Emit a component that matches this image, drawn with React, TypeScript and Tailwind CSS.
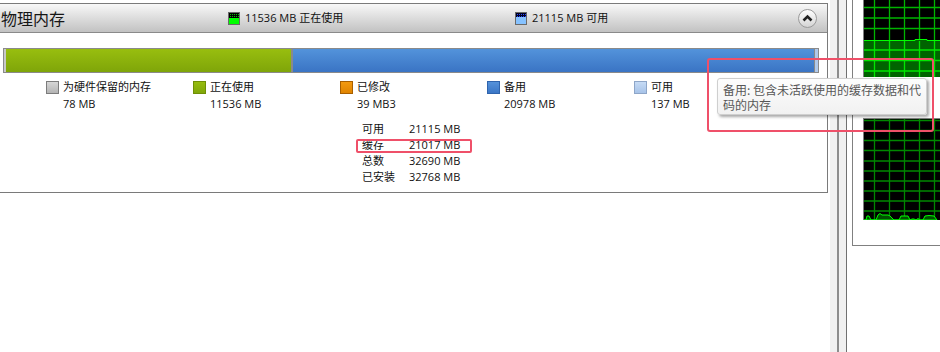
import React from "react";

const legend = [
  { label: "为硬件保留的内存", value: "78 MB", sw: "border-[#7c7c7c] bg-linear-to-b from-[#d6d6d6] to-[#b4b4b4]" },
  { label: "正在使用", value: "11536 MB", sw: "border-[#6f8f06] bg-linear-to-b from-[#96bc0e] to-[#80a70a]" },
  { label: "已修改", value: "39 MB3", sw: "border-[#a85f00] bg-linear-to-b from-[#f39a10] to-[#e08400]" },
  { label: "备用", value: "20978 MB", sw: "border-[#2f64ad] bg-linear-to-b from-[#5592da] to-[#3b76c6]" },
  { label: "可用", value: "137 MB", sw: "border-[#8ea6c8] bg-linear-to-b from-[#c6dbf5] to-[#a7c3e8]" },
];

const table = [
  ["可用", "21115 MB"],
  ["缓存", "21017 MB"],
  ["总数", "32690 MB"],
  ["已安装", "32768 MB"],
];

function UsedIcon() {
  return (
    <svg width="12" height="13" viewBox="0 0 12 13" className="shrink-0">
      <defs>
        <pattern id="gdots" width="2" height="2" patternUnits="userSpaceOnUse">
          <rect width="2" height="2" fill="#000" />
          <rect x="0" y="0" width="1" height="1" fill="#00c000" />
        </pattern>
      </defs>
      <rect x="0" y="0" width="12" height="13" fill="#00ff00" />
      <rect x="1" y="1" width="10" height="5" fill="url(#gdots)" />
      <rect x="0.5" y="0.5" width="11" height="12" fill="none" stroke="#6a6a6a" />
    </svg>
  );
}

function AvailIcon() {
  return (
    <svg width="12" height="13" viewBox="0 0 12 13" className="shrink-0">
      <defs>
        <pattern id="bdots" width="2" height="2" patternUnits="userSpaceOnUse">
          <rect width="2" height="2" fill="#000020" />
          <rect x="0" y="0" width="1" height="1" fill="#2a48ff" />
        </pattern>
      </defs>
      <rect x="0" y="0" width="12" height="13" fill="#86c2ff" />
      <rect x="1" y="1" width="10" height="4" fill="url(#bdots)" />
      <rect x="0.5" y="0.5" width="11" height="12" fill="none" stroke="#6a6a6a" />
    </svg>
  );
}

const vx = [10.5, 25.5, 40.5, 55.5, 70.5];

function TopGraph() {
  const topH = [7.5, 18, 28.5];
  const fillH = [50, 60.5, 71];
  return (
    <svg width="76" height="77" viewBox="0 0 76 77" className="block">
      <rect width="76" height="77" fill="#000" />
      {vx.map((x) => (
        <line key={x} x1={x} y1="0" x2={x} y2="41" stroke="#00b400" strokeWidth="1.3" />
      ))}
      {topH.map((y) => (
        <line key={y} x1="0" y1={y} x2="76" y2={y} stroke="#00b400" strokeWidth="1.3" />
      ))}
      <path d="M0,41 H51 V40 H63 V41 H76 V77 H0 Z" fill="#006400" />
      {vx.map((x) => (
        <line key={"f" + x} x1={x} y1="41" x2={x} y2="77" stroke="#00e600" strokeWidth="1.3" />
      ))}
      {fillH.map((y) => (
        <line key={"h" + y} x1="0" y1={y} x2="76" y2={y} stroke="#00e600" strokeWidth="1.3" />
      ))}
      <polyline points="0,40.5 51,40.5 51,39.5 63,39.5 63,40.5 76,40.5" fill="none" stroke="#00ff00" strokeWidth="1" />
    </svg>
  );
}

function BottomGraph() {
  const hs = [1.5, 11.5, 21.5, 31.5, 42, 52, 62, 72, 82, 92];
  return (
    <svg width="76" height="101" viewBox="0 0 76 101" className="block">
      <rect width="76" height="101" fill="#000" />
      {vx.map((x) => (
        <line key={x} x1={x} y1="0" x2={x} y2="101" stroke="#008800" strokeWidth="1.3" />
      ))}
      {hs.map((y) => (
        <line key={y} x1="0" y1={y} x2="76" y2={y} stroke="#008800" strokeWidth="1.3" />
      ))}
      <path
        d="M0,101 L2,101 L3,97 L5,97 L7,101 L12,101 L14,96 L16,94.5 L18,96 L24,96 L26,97 L30,101 L35,101 L37,97 L44,97 L46,101 L48,100 L50,100 L52,101 L54,99.5 L56,101 L59,101 L61,97 L65,96.5 L70,97 L73,101 Z"
        fill="#005000"
        stroke="#00ff00"
        strokeWidth="1"
      />
    </svg>
  );
}

export default function App() {
  return (
    <div className="relative flex h-[352px] w-[940px] overflow-hidden bg-white font-['Open_Sans','Noto_Sans_CJK_SC',sans-serif] text-[11px] text-[#111]">
      {/* main panel column */}
      <div className="w-[828px] shrink-0 pt-[3px]">
        <div className="border-y border-r border-[#7a7a7a]">
          {/* header */}
          <div className="flex h-[28px] items-center bg-linear-to-b from-[#f8f8f8] to-[#c2c2c2]">
            <div className="w-[228px] shrink-0 pl-[1px] font-['Noto_Sans_CJK_SC',sans-serif] text-[16px] leading-[20px] text-[#161616]">物理内存</div>
            <div className="flex w-[287px] shrink-0 items-center">
              <UsedIcon />
              <span className="ml-[5px] leading-[16px]">11536 MB 正在使用</span>
            </div>
            <div className="flex items-center">
              <AvailIcon />
              <span className="ml-[5px] leading-[16px]">21115 MB 可用</span>
            </div>
            <div className="ml-auto mr-[10px] flex h-[19px] w-[19px] items-center justify-center rounded-full border border-[#9a9a9a] bg-linear-to-b from-[#ffffff] to-[#d4d4d4]">
              <svg width="11" height="8" viewBox="0 0 11 8">
                <polyline points="1.5,6.5 5.5,2.5 9.5,6.5" fill="none" stroke="#222" strokeWidth="2.6" />
              </svg>
            </div>
          </div>
          {/* content */}
          <div className="relative h-[160px] border-t border-[#8a8a8a]">
            <div className="ml-[3px] mt-[15px] flex h-[25px] w-[816px] border border-[#8a8a8a]">
              <div className="w-[2px] bg-[#c8c8c8]" />
              <div className="w-[285px] bg-linear-to-b from-[#98be0f] to-[#7fa509]" />
              <div className="w-[2px] bg-[#8a8a8a]" />
              <div className="flex-1 bg-linear-to-b from-[#5393db] to-[#3a74c4]" />
              <div className="w-[1px] bg-[#8a8a8a]" />
              <div className="w-[3px] bg-[#b0c9ea]" />
            </div>
            <div className="mt-[6px] flex pl-[46px]">
              {legend.map((it) => (
                <div key={it.label} className="flex w-[147px] shrink-0">
                  <div className={"mt-[2px] h-[13px] w-[13px] shrink-0 border " + it.sw} />
                  <div className="ml-[4px] flex flex-col">
                    <div className="leading-[16px]">{it.label}</div>
                    <div className="mt-[1px] leading-[16px]">{it.value}</div>
                  </div>
                </div>
              ))}
            </div>
            <div className="ml-[362px] mt-[9px] flex flex-col">
              {table.map(([k, v]) => (
                <div key={k} className="flex h-[16px] items-center leading-[16px]">
                  <span className="w-[47px] shrink-0">{k}</span>
                  <span>{v}</span>
                </div>
              ))}
            </div>
          </div>
        </div>
      </div>

      {/* splitter strips */}
      <div className="w-[2px] shrink-0" />
      <div className="w-[7px] shrink-0 bg-[#f0f0f0]" />
      <div className="w-[2px] shrink-0 bg-[#8c8c8c]" />
      <div className="w-[7px] shrink-0 bg-[#f0f0f0]" />
      <div className="w-[1px] shrink-0 bg-[#707070]" />
      <div className="w-[5px] shrink-0" />

      {/* graphs column */}
      <div className="flex h-[246px] flex-1 flex-col border-b border-l border-[#808080] pl-[10px]">
        <div className="border-l border-[#808080]">
          <TopGraph />
        </div>
        <div className="h-[41px]" />
        <div className="border-l border-t border-[#808080]">
          <BottomGraph />
        </div>
      </div>

      {/* annotation on 缓存 row */}
      <div className="absolute left-[356px] top-[139px] h-[14px] w-[116px] rounded-[2px] border-2 border-[#ef5069]" />

      {/* tooltip */}
      <div className="absolute left-[717px] top-[78px] h-[37px] w-[210px] rounded-[3px] border border-[#cfcfcf] bg-linear-to-b from-[#fdfdfd] to-[#f1f1f1] pl-[5px] pt-[3px] font-['Noto_Sans_CJK_SC',sans-serif] text-[12px] leading-[15px] text-[#575757] shadow-[2px_2px_3px_rgba(0,0,0,0.35)]">
        <div className="h-[15px] whitespace-nowrap">备用: 包含未活跃使用的缓存数据和代</div>
        <div className="h-[15px] whitespace-nowrap">码的内存</div>
      </div>

      {/* annotation around tooltip */}
      <div className="absolute left-[707px] top-[58px] h-[74px] w-[227px] rounded-[3px] border-2 border-[#ef5069]" />
    </div>
  );
}
